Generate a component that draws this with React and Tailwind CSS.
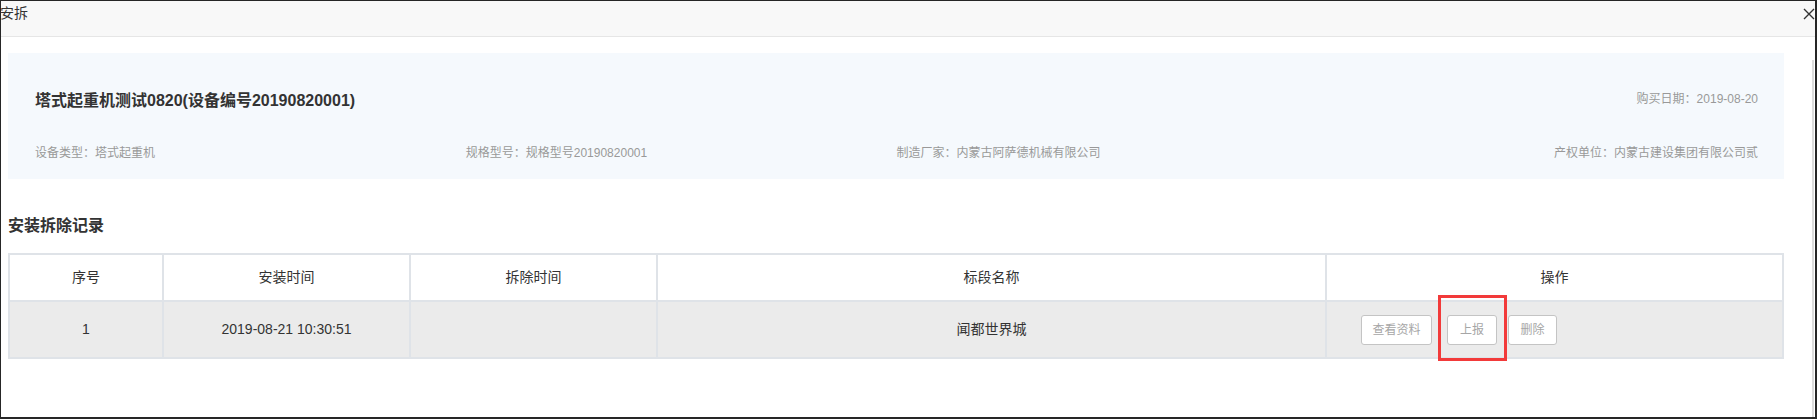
import React from 'react';

const columns = [
    { title: '序号', w: 'w-[154px]' },
    { title: '安装时间', w: 'w-[247px]' },
    { title: '拆除时间', w: 'w-[247px]' },
    { title: '标段名称', w: 'w-[669px]' },
    { title: '操作', w: 'w-[457px]' },
];

const records = [
    { no: 1, installAt: '2019-08-21 10:30:51', removeAt: '', section: '闻都世界城' },
];

export default function App() {
    return (
        <div className="w-[1817px] h-[419px] bg-white border-t border-l border-r-2 border-b-2 border-[#262626] flex flex-col overflow-hidden font-['Liberation_Sans','Noto_Sans_CJK_SC',sans-serif]">
            {/* title bar */}
            <div className="h-[36px] shrink-0 bg-[#f8f8f8] border-b border-[#e6e6e6] flex justify-between items-start">
                <span className="-ml-px mt-[2px] text-[14px] leading-[20px] text-[#333]">安拆</span>
                <svg className="mt-[7px]" width="12" height="12" viewBox="0 0 12 12" fill="none" stroke="#333" strokeWidth="1.4">
                    <path d="M1 1L11 11M11 1L1 11" />
                </svg>
            </div>

            <div className="flex flex-1">
                <div className="flex-1 pl-[7px]">
                    {/* device info */}
                    <div className="mt-[16px] w-[1776px] h-[126px] bg-[#f5f9fd] pl-[27px] pr-[26px] pt-[36px]">
                        <div className="flex justify-between items-start">
                            <span className="text-[16px] leading-[24px] font-bold text-[#333]">塔式起重机测试0820(设备编号20190820001)</span>
                            <span className="text-[12px] leading-[20px] text-[#999]">购买日期：2019-08-20</span>
                        </div>
                        <div className="mt-[30px] grid grid-cols-4 text-[12px] leading-[20px] text-[#999]">
                            <span>设备类型：塔式起重机</span>
                            <span>规格型号：规格型号20190820001</span>
                            <span>制造厂家：内蒙古阿萨德机械有限公司</span>
                            <span className="text-right">产权单位：内蒙古建设集团有限公司贰</span>
                        </div>
                    </div>

                    <h3 className="mt-[35px] text-[16px] leading-[24px] font-bold text-[#333]">安装拆除记录</h3>

                    {/* records table */}
                    <div className="relative mt-[15px] w-[1776px] border-l-2 border-t-2 border-[#dfe3e8] text-[14px] text-[#333]">
                        <div className="flex bg-white">
                            {columns.map((c) => (
                                <div key={c.title} className={`${c.w} h-[47px] border-r-2 border-b-2 border-[#dfe3e8] flex items-center justify-center`}>
                                    {c.title}
                                </div>
                            ))}
                        </div>
                        {records.map((r) => (
                            <div key={r.no} className="flex bg-[#ebebeb]">
                                <div className="w-[154px] h-[57px] border-r-2 border-b-2 border-[#dfe3e8] flex items-center justify-center">{r.no}</div>
                                <div className="w-[247px] h-[57px] border-r-2 border-b-2 border-[#dfe3e8] flex items-center justify-center">{r.installAt}</div>
                                <div className="w-[247px] h-[57px] border-r-2 border-b-2 border-[#dfe3e8] flex items-center justify-center">{r.removeAt}</div>
                                <div className="w-[669px] h-[57px] border-r-2 border-b-2 border-[#dfe3e8] flex items-center justify-center">{r.section}</div>
                                <div className="w-[457px] h-[57px] border-r-2 border-b-2 border-[#dfe3e8] flex items-center pl-[34px] text-[12px] text-[#a6a6a6]">
                                    <button className="w-[71px] h-[30px] mr-[15px] bg-white border border-[#c4c4c4] rounded-[3px]">查看资料</button>
                                    <button className="w-[50px] h-[30px] mr-[11px] bg-white border border-[#c4c4c4] rounded-[3px]">上报</button>
                                    <button className="w-[49px] h-[30px] bg-white border border-[#c4c4c4] rounded-[3px]">删除</button>
                                </div>
                            </div>
                        ))}
                        {/* highlight annotation */}
                        <div className="absolute left-[1428px] top-[40px] w-[69px] h-[66px] border-[3px] border-[#f23a3a]" />
                    </div>
                </div>
                {/* scrollbar track */}
                <div className="w-[3px] pt-[23px]">
                    <div className="h-full w-[2px] bg-[#dcdcdc]" />
                </div>
            </div>
        </div>
    );
}
